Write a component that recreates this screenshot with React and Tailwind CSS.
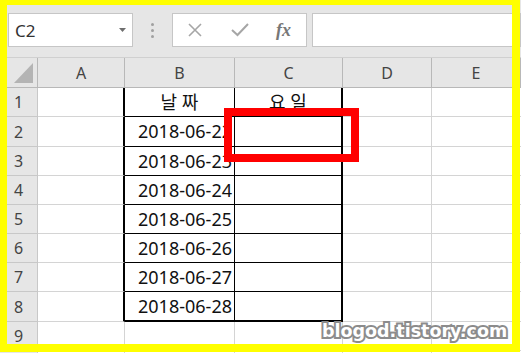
import React from 'react';

const rowHeights = [29, 30, 29, 29, 29, 29, 29, 30, 29, 29];
const dates = ['2018-06-22', '2018-06-23', '2018-06-24', '2018-06-25', '2018-06-26', '2018-06-27', '2018-06-28'];

function cellClass(col, row) {
  const inTable = row >= 1 && row <= 8;
  if (col === 'A') {
    return inTable
      ? 'border-r-2 border-r-black border-b border-b-[#d4d4d4]'
      : 'border-r border-b border-[#d4d4d4]';
  }
  if (col === 'B') {
    if (!inTable) return 'border-r border-b border-[#d4d4d4]';
    return row === 8 ? 'border-r border-b-2 border-black' : 'border-r border-b border-black';
  }
  if (col === 'C') {
    if (!inTable) return 'border-r border-b border-[#d4d4d4]';
    return row === 8 ? 'border-r-2 border-b-2 border-black' : 'border-r-2 border-b border-black';
  }
  if (col === 'D') return 'border-r border-b border-[#d4d4d4]';
  return 'border-b border-[#d4d4d4]';
}

function cellText(col, row) {
  if (col === 'B' && row === 1) return '날 짜';
  if (col === 'C' && row === 1) return '요 일';
  if (col === 'B' && row >= 2 && row <= 8) return dates[row - 2];
  return '';
}

export default function App() {
  const cols = ['A', 'B', 'C', 'D', 'E'];

  return (
    <div className="relative w-[521px] h-[353px] overflow-hidden bg-white font-['Noto_Sans','Noto_Sans_CJK_KR',sans-serif]">
      {/* formula bar */}
      <div className="h-[58px] bg-[#e6e6e6] flex items-start pt-[13px] border-b border-[#d0d0d0]">
        <div className="ml-[8px] w-[125px] h-[34px] bg-white border border-[#c6c6c6] flex items-center justify-between pl-[6px] pr-[6px]">
          <span className="text-[17px] text-[#333] leading-none">C2</span>
          <svg width="7" height="4" viewBox="0 0 7 4"><path d="M0 0 L7 0 L3.5 4 Z" fill="#6e6e6e" /></svg>
        </div>
        <div className="w-[39px] h-[34px] flex flex-col items-center justify-center gap-[3px]">
          <span className="w-[3px] h-[3px] rounded-full bg-[#a0a0a0]" />
          <span className="w-[3px] h-[3px] rounded-full bg-[#a0a0a0]" />
          <span className="w-[3px] h-[3px] rounded-full bg-[#a0a0a0]" />
        </div>
        <div className="w-[135px] h-[34px] bg-white border border-[#c6c6c6] flex items-center">
          <svg className="ml-[14px]" width="16" height="16" viewBox="0 0 16 16">
            <path d="M2 2 L14 14 M14 2 L2 14" stroke="#a6a6a6" strokeWidth="1.6" fill="none" />
          </svg>
          <svg className="ml-[28px]" width="18" height="14" viewBox="0 0 18 14">
            <path d="M1 7 L6.5 12 L17 1" stroke="#a6a6a6" strokeWidth="2" fill="none" />
          </svg>
          <span className="ml-[27px] font-['Liberation_Serif',serif] italic font-bold text-[18px] text-[#777] leading-none">fx</span>
        </div>
        <div className="ml-[5px] flex-1 h-[34px] bg-white border border-[#c6c6c6]" />
      </div>

      {/* sheet */}
      <div className="grid grid-cols-[38px_87px_110px_108px_89px_1fr]">
        <div className="h-[30px] bg-[#e6e6e6] border-r border-b border-[#b8b8b8] flex items-end justify-end pr-[4px] pb-[4px]">
          <svg width="19" height="20" viewBox="0 0 19 20"><path d="M19 0 L19 20 L0 20 Z" fill="#b4b4b4" /></svg>
        </div>
        {cols.map((c) => (
          <div key={c} className="h-[30px] bg-[#e6e6e6] border-r border-b border-[#b8b8b8] flex items-center justify-center text-[16px] text-[#444]">
            {c}
          </div>
        ))}

        {rowHeights.map((h, i) => {
          const row = i + 1;
          return (
            <React.Fragment key={row}>
              <div style={{ height: h }} className="bg-[#e6e6e6] border-r border-b border-[#c8c8c8] flex items-center pl-[14px] text-[16px] text-[#444]">
                {row <= 9 ? row : ''}
              </div>
              {cols.map((c) => {
                const t = cellText(c, row);
                const isDate = c === 'B' && row >= 2;
                return (
                  <div
                    key={c}
                    style={{ height: h }}
                    className={`${cellClass(c, row)} flex items-center overflow-hidden whitespace-nowrap text-[18px] text-[#111] ${isDate ? 'justify-end pr-[2px]' : 'justify-center'}`}
                  >
                    {t}
                  </div>
                );
              })}
            </React.Fragment>
          );
        })}
      </div>

      {/* red highlight */}
      <div className="absolute left-[224px] top-[108px] w-[135px] h-[54px] border-[8px] border-[#ff0000]" />

      {/* watermark */}
      <div className="absolute left-[322px] top-[323px] font-['DejaVu_Sans',sans-serif] font-bold text-[17.5px] leading-none text-white [-webkit-text-stroke:4px_#8c8c8c] [paint-order:stroke_fill]">
        blogod.tistory.com
      </div>

      {/* yellow frame */}
      <div className="absolute left-0 top-0 w-[520px] h-[352px] border-l-[7px] border-t-[5px] border-r-[8px] border-b-[8px] border-[#ffff00] pointer-events-none" />
    </div>
  );
}
